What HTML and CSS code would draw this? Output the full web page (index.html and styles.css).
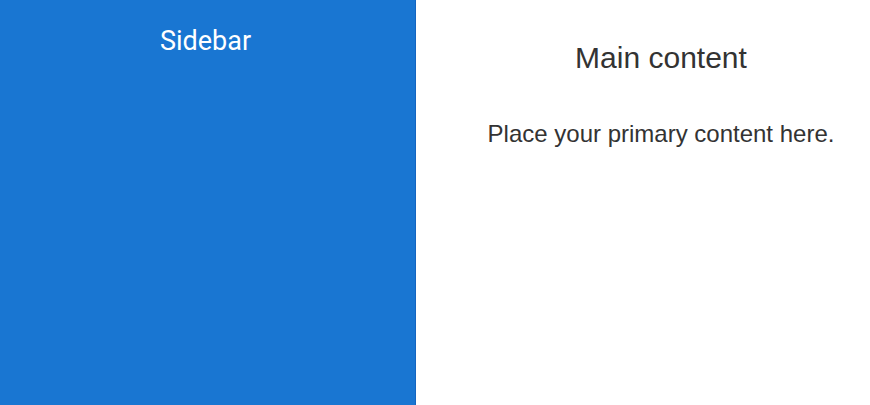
FILE: index.html
```html
<!DOCTYPE html>
<html lang="en">
<head>
<meta charset="utf-8">
<title>Layout</title>
<link rel="stylesheet" href="styles.css">
</head>
<body>
<div class="layout">
  <aside class="sidebar">
    <h2 class="sidebar-title">Sidebar</h2>
  </aside>
  <main class="main">
    <h1 class="main-title">Main content</h1>
    <p class="main-text">Place your primary content here.</p>
  </main>
</div>
</body>
</html>
```
FILE: styles.css
```css
html, body {
  margin: 0;
  padding: 0;
  height: 100%;
  background: #ffffff;
}
.layout {
  display: flex;
  height: 405px;
}
.sidebar {
  width: 415px;
  flex: none;
  background: #1976d2;
  border-right: 1px solid #1565c0;
  color: #ffffff;
  text-align: center;
  padding-top: 26px;
  box-sizing: content-box;
}
.sidebar-title {
  margin: 0;
  padding-right: 4px;
  font-family: Roboto, sans-serif;
  font-weight: 400;
  font-size: 27px;
  line-height: 30px;
}
.main {
  flex: 1;
  text-align: center;
  padding-left: 36px;
  color: #333333;
  font-family: "Liberation Sans", Arial, sans-serif;
}
.main-title {
  margin: 40px 0 0;
  font-weight: 400;
  font-size: 30px;
  line-height: 36px;
}
.main-text {
  margin: 44px 0 0;
  font-size: 24px;
  line-height: 28px;
}
```
